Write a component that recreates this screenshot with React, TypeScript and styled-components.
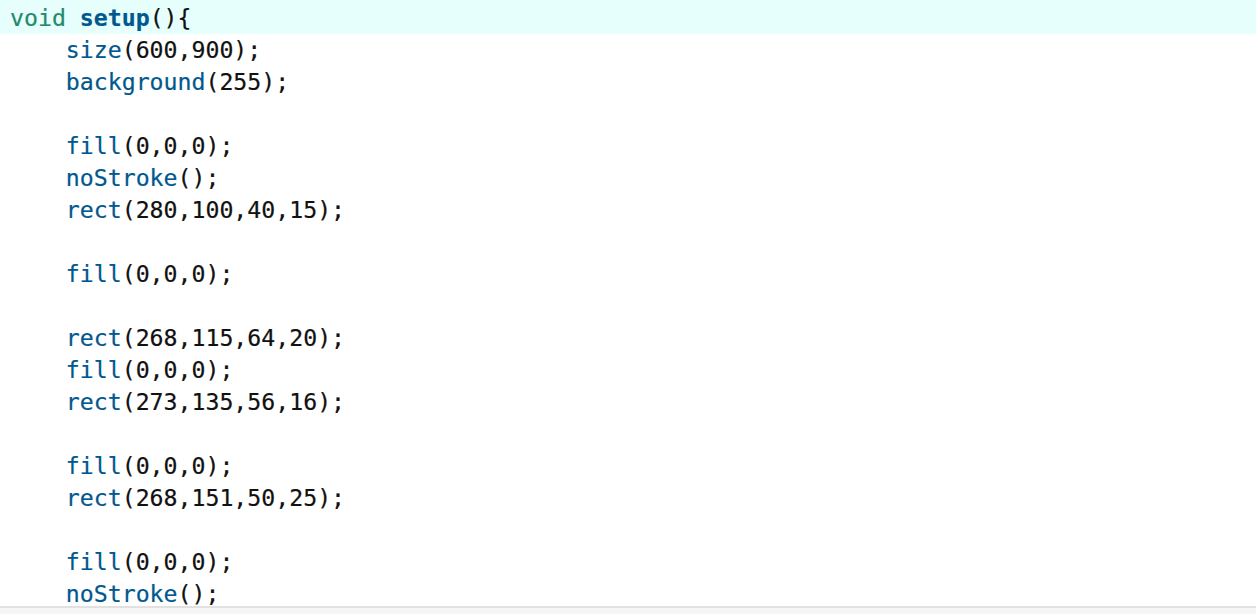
import React from "react";
import styled, { createGlobalStyle } from "styled-components";

const Global = createGlobalStyle`
  html, body { margin: 0; padding: 0; background: #fff; }
  body { overflow: hidden; }
`;

const Page = styled.div`
  width: 1256px;
  height: 614px;
  display: flex;
  flex-direction: column;
  background: #fff;
  overflow: hidden;
`;

const Editor = styled.div`
  flex: 1;
  display: flex;
  flex-direction: column;
  overflow: hidden;
  font-family: "DejaVu Sans Mono", "Liberation Mono", monospace;
  font-size: 23.2px;
  color: #111;
  -webkit-text-stroke: 0.2px currentColor;
`;

const Line = styled.div<{ $current?: boolean; $first?: boolean }>`
  height: 32px;
  line-height: 32px;
  padding-left: 10px;
  padding-top: ${(p) => (p.$first ? "2px" : "0")};
  white-space: pre;
  background: ${(p) => (p.$current ? "#e6fffc" : "transparent")};
  flex-shrink: 0;
`;

const Kw = styled.span`
  color: #238a6c;
`;
const Fn = styled.span<{ $bold?: boolean }>`
  color: #00588e;
  font-weight: ${(p) => (p.$bold ? 700 : 400)};
`;

const StatusEdge = styled.div`
  height: 6px;
  flex-shrink: 0;
  border-top: 2px solid #e1e1e1;
  background: #f6f6f6;
`;

type Tok = [string, "fn" | "txt"];
const lines: Tok[][] = [
  [["size", "fn"], ["(600,900);", "txt"]],
  [["background", "fn"], ["(255);", "txt"]],
  [],
  [["fill", "fn"], ["(0,0,0);", "txt"]],
  [["noStroke", "fn"], ["();", "txt"]],
  [["rect", "fn"], ["(280,100,40,15);", "txt"]],
  [],
  [["fill", "fn"], ["(0,0,0);", "txt"]],
  [],
  [["rect", "fn"], ["(268,115,64,20);", "txt"]],
  [["fill", "fn"], ["(0,0,0);", "txt"]],
  [["rect", "fn"], ["(273,135,56,16);", "txt"]],
  [],
  [["fill", "fn"], ["(0,0,0);", "txt"]],
  [["rect", "fn"], ["(268,151,50,25);", "txt"]],
  [],
  [["fill", "fn"], ["(0,0,0);", "txt"]],
  [["noStroke", "fn"], ["();", "txt"]],
];

export default function App() {
  return (
    <Page>
      <Global />
      <Editor>
        <Line $current $first>
          <Kw>void</Kw> <Fn $bold>setup</Fn>(){"{"}
        </Line>
        {lines.map((toks, i) => (
          <Line key={i}>
            {toks.length ? "    " : " "}
            {toks.map(([t, k], j) =>
              k === "fn" ? <Fn key={j}>{t}</Fn> : <span key={j}>{t}</span>
            )}
          </Line>
        ))}
      </Editor>
      <StatusEdge />
    </Page>
  );
}
